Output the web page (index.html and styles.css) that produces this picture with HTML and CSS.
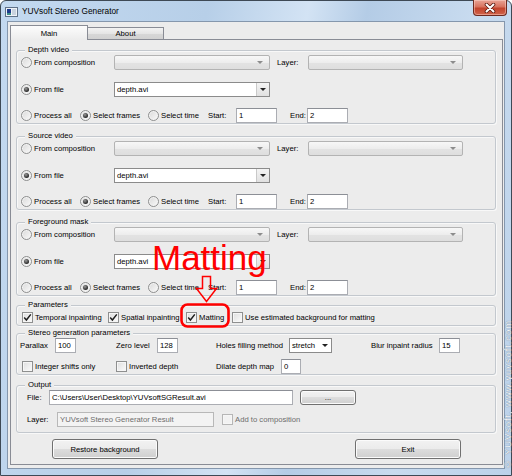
FILE: index.html
```html
<!DOCTYPE html>
<html>
<head>
<meta charset="utf-8">
<title>YUVsoft Stereo Generator</title>
<link rel="stylesheet" href="styles.css">
</head>
<body>
<div class="window">
    <div class="titlebar">
        <svg class="app-icon" width="13" height="10" viewBox="0 0 13 10">
            <rect x="0.5" y="0.5" width="12" height="9" fill="#eef2f7" stroke="#5f7188"/>
            <rect x="2" y="2" width="4" height="4" fill="#1d3c8c"/>
            <rect x="2" y="6" width="4" height="2" fill="#3f8f8a"/>
            <rect x="7" y="2" width="4" height="6" fill="#c9d3df"/>
        </svg>
        <span class="caption">YUVsoft Stereo Generator</span>
        <span class="close">
            <svg width="12" height="10" viewBox="0 0 12 10">
                <path d="M2.5 1.5 L9.5 8.5 M9.5 1.5 L2.5 8.5" stroke="#5a1a10" stroke-width="3.6" stroke-linecap="round"/>
                <path d="M2.5 1.5 L9.5 8.5 M9.5 1.5 L2.5 8.5" stroke="#fff" stroke-width="2" stroke-linecap="round"/>
            </svg>
        </span>
    </div>

    <div class="client">
        <div class="tabs">
            <span class="tab tab-active">Main</span>
            <span class="tab">About</span>
        </div>

        <div class="pane">
            <!-- depth video -->
            <div class="group">
                <div class="group-title">Depth video</div>
                <div class="row">
                    <span class="opt source-opt"><span class="radio"></span>From composition</span>
                    <span class="combo source-combo"></span>
                    <span class="layer-lbl">Layer:</span>
                    <span class="combo layer-combo"></span>
                </div>
                <div class="row">
                    <span class="opt source-opt"><span class="radio radio-on"></span>From file</span>
                    <span class="combo combo-edit source-combo"><span class="combo-text">depth.avi</span><span class="combo-btn"></span></span>
                </div>
                <div class="row row-range">
                    <span class="opt range-all"><span class="radio"></span>Process all</span>
                    <span class="opt range-frames"><span class="radio radio-on"></span>Select frames</span>
                    <span class="opt range-time"><span class="radio"></span>Select time</span>
                    <span class="start-lbl">Start:</span>
                    <span class="field frame-field">1</span>
                    <span class="end-lbl">End:</span>
                    <span class="field frame-field">2</span>
                </div>
            </div>

            <!-- source video -->
            <div class="group group-source">
                <div class="group-title">Source video</div>
                <div class="row">
                    <span class="opt source-opt"><span class="radio"></span>From composition</span>
                    <span class="combo source-combo"></span>
                    <span class="layer-lbl">Layer:</span>
                    <span class="combo layer-combo"></span>
                </div>
                <div class="row">
                    <span class="opt source-opt"><span class="radio radio-on"></span>From file</span>
                    <span class="combo combo-edit source-combo"><span class="combo-text">depth.avi</span><span class="combo-btn"></span></span>
                </div>
                <div class="row row-range">
                    <span class="opt range-all"><span class="radio"></span>Process all</span>
                    <span class="opt range-frames"><span class="radio radio-on"></span>Select frames</span>
                    <span class="opt range-time"><span class="radio"></span>Select time</span>
                    <span class="start-lbl">Start:</span>
                    <span class="field frame-field">1</span>
                    <span class="end-lbl">End:</span>
                    <span class="field frame-field">2</span>
                </div>
            </div>

            <!-- foreground mask -->
            <div class="group group-mask">
                <div class="group-title">Foreground mask</div>
                <div class="row">
                    <span class="opt source-opt"><span class="radio"></span>From composition</span>
                    <span class="combo source-combo"></span>
                    <span class="layer-lbl">Layer:</span>
                    <span class="combo layer-combo"></span>
                </div>
                <div class="row">
                    <span class="opt source-opt"><span class="radio radio-on"></span>From file</span>
                    <span class="combo combo-edit source-combo"><span class="combo-text">depth.avi</span><span class="combo-btn"></span></span>
                </div>
                <div class="row row-range">
                    <span class="opt range-all"><span class="radio"></span>Process all</span>
                    <span class="opt range-frames"><span class="radio radio-on"></span>Select frames</span>
                    <span class="opt range-time"><span class="radio"></span>Select time</span>
                    <span class="start-lbl">Start:</span>
                    <span class="field frame-field">1</span>
                    <span class="end-lbl">End:</span>
                    <span class="field frame-field">2</span>
                </div>
            </div>

            <!-- parameters -->
            <div class="group group-params">
                <div class="group-title">Parameters</div>
                <div class="row row-checks">
                    <span class="opt check-temporal"><span class="check"><svg width="9" height="9" viewBox="0 0 9 9"><path d="M1.2 4.6 L3.4 7 L7.8 1.4" fill="none" stroke="#1e1e1e" stroke-width="1.5"/></svg></span>Temporal inpainting</span>
                    <span class="opt check-spatial"><span class="check"><svg width="9" height="9" viewBox="0 0 9 9"><path d="M1.2 4.6 L3.4 7 L7.8 1.4" fill="none" stroke="#1e1e1e" stroke-width="1.5"/></svg></span>Spatial inpainting</span>
                    <span class="opt check-matting"><span class="check"><svg width="9" height="9" viewBox="0 0 9 9"><path d="M1.2 4.6 L3.4 7 L7.8 1.4" fill="none" stroke="#1e1e1e" stroke-width="1.5"/></svg></span>Matting</span>
                    <span class="opt"><span class="check"></span>Use estimated background for matting</span>
                </div>
            </div>

            <!-- stereo generation -->
            <div class="group group-stereo">
                <div class="group-title">Stereo generation parameters</div>
                <div class="row row-stereo">
                    <span class="cell cell-1"><span class="parallax-lbl">Parallax</span><span class="field num-field">100</span></span>
                    <span class="cell cell-2"><span class="zero-lbl">Zero level</span><span class="field num-field">128</span></span>
                    <span class="cell cell-3"><span class="holes-lbl">Holes filling method</span><span class="combo combo-edit holes-combo"><span class="combo-text">stretch</span><span class="combo-arrow"></span></span></span>
                    <span class="cell"><span class="blur-lbl">Blur inpaint radius</span><span class="field num-field">15</span></span>
                </div>
                <div class="row row-stereo row-stereo-2">
                    <span class="cell cell-1"><span class="opt opt-indent"><span class="check"></span>Integer shifts only</span></span>
                    <span class="cell cell-2"><span class="opt"><span class="check"></span>Inverted depth</span></span>
                    <span class="cell cell-3"><span class="dilate-lbl">Dilate depth map</span><span class="field dilate-field">0</span></span>
                </div>
            </div>

            <!-- output -->
            <div class="group group-output">
                <div class="group-title">Output</div>
                <div class="row row-output">
                    <span class="file-lbl">File:</span>
                    <span class="field file-field">C:\Users\User\Desktop\YUVsoftSGResult.avi</span>
                    <span class="btn browse-btn">...</span>
                </div>
                <div class="row row-output row-output-2">
                    <span class="layer-out-lbl">Layer:</span>
                    <span class="field field-disabled layer-field">YUVsoft Stereo Generator Result</span>
                    <span class="opt opt-disabled"><span class="check check-disabled"></span>Add to composition</span>
                </div>
            </div>

            <div class="actions">
                <span class="btn action-btn">Restore background</span>
                <span class="btn action-btn exit-btn">Exit</span>
            </div>
        </div>
    </div>

    <svg class="callout" width="512" height="476" viewBox="0 0 512 476">
        <text x="152" y="270" font-family="Liberation Sans, Arial, sans-serif" font-size="35" fill="#ff0000">Matting</text>
        <path d="M202.5 276.5 H210.5 V288.5 H216.5 L206.5 301.5 L196.5 288.5 H202.5 Z" fill="none" stroke="#ff0000" stroke-width="1.5"/>
        <rect x="181.5" y="304.5" width="47" height="22" rx="6" fill="none" stroke="#ff0000" stroke-width="2.6"/>
    </svg>

    <div class="watermark">© YUVsoft, www.yuvsoft.com</div>
</div>
</body>
</html>
```

FILE: styles.css
```css
* {
    box-sizing: border-box;
}

html, body {
    margin: 0;
}

body {
    width: 512px;
    height: 476px;
    overflow: hidden;
    font-family: "Liberation Sans", Arial, sans-serif;
    font-size: 7.7px;
    color: #000;
    background: #fff;
}

/* window frame */
.window {
    position: relative;
    width: 512px;
    height: 476px;
    border: 1px solid #3e4955;
    border-radius: 6px 6px 0 0;
    padding: 0 6px 6px 6px;
    display: flex;
    flex-direction: column;
    background: linear-gradient(100deg, #c3d9f0 0%, #b7cfe8 35%, #d3e3f4 52%, #b4cce6 62%, #c8dbef 80%, #bcd2ea 100%);
}

.titlebar {
    height: 20px;
    margin: 0 -6px;
    padding-left: 4px;
    display: flex;
    align-items: center;
}

.app-icon {
    flex: none;
    margin-top: 2px;
}

.caption {
    margin-left: 4px;
    font-size: 8.3px;
    color: #000;
}

.close {
    align-self: flex-start;
    margin: -1px 4px 0 auto;
    width: 34px;
    height: 16px;
    border: 1px solid #6e2a20;
    border-top: 0;
    border-radius: 0 0 4px 4px;
    background: linear-gradient(#e9a395 0%, #d8735f 45%, #c2432c 55%, #d0644b 100%);
    box-shadow: inset 0 0 0 1px rgba(255, 220, 210, 0.45);
    display: flex;
    align-items: center;
    justify-content: center;
}

.close svg {
    display: block;
}

.client {
    flex: 1;
    border: 1px solid #8597ad;
    background: #ececec;
    padding: 3px 1px 3px 2px;
    display: flex;
    flex-direction: column;
}

/* tabs */
.tabs {
    display: flex;
    align-items: flex-end;
    height: 15px;
    margin-bottom: -1px;
}

.tab {
    width: 77px;
    height: 13px;
    margin-left: -1px;
    border: 1px solid #898c95;
    border-bottom: 0;
    display: flex;
    align-items: center;
    justify-content: center;
    padding-bottom: 1px;
    background: linear-gradient(#f3f3f3, #e4e4e4 50%, #d7d7d7 51%, #d0d0d0);
}

.tab-active {
    position: relative;
    z-index: 1;
    width: 78px;
    height: 15px;
    margin-left: 0;
    padding-bottom: 0;
    background: linear-gradient(#fcfcfc, #ececec);
}

.pane {
    flex: 1;
    border: 1px solid #898c95;
    background: #ececec;
    padding: 10px 6px 0 5px;
}

/* group boxes */
.group {
    border: 1px solid #c3c8ce;
    border-radius: 3px;
    box-shadow: inset 1px 1px 0 #f8f8f8, 1px 1px 0 #f8f8f8;
}

.group-source, .group-mask {
    margin-top: 12px;
}

.group-params {
    margin-top: 9px;
}

.group-stereo {
    margin-top: 7px;
}

.group-output {
    margin-top: 10px;
    padding-bottom: 5px;
}

.group-title {
    width: max-content;
    height: 10px;
    line-height: 10px;
    margin: -6px 0 0 8px;
    padding: 0 3px;
    background: #ececec;
}

.row {
    display: flex;
    align-items: center;
    height: 15px;
    padding-left: 4px;
    white-space: nowrap;
}

.row + .row {
    margin-top: 12px;
}

.row + .row-range {
    margin-top: 11px;
}

/* radio buttons and check boxes */
.opt {
    flex: none;
    display: flex;
    align-items: center;
}

.radio, .check {
    flex: none;
    position: relative;
    width: 11px;
    height: 11px;
    margin-right: 2px;
    border: 1px solid #8e8f8f;
}

.radio {
    border-radius: 50%;
    background: linear-gradient(135deg, #d9d9d9, #fafafa);
    box-shadow: inset 0 0 0 1px #f4f4f4;
}

.radio-on::after {
    content: "";
    position: absolute;
    left: 2px;
    top: 2px;
    width: 5px;
    height: 5px;
    border-radius: 50%;
    background: radial-gradient(circle at 40% 35%, #9a9a9a, #1e1e1e 75%);
}

.check {
    background: linear-gradient(135deg, #dedede, #fbfbfb);
    box-shadow: inset 0 0 0 1px #f6f6f6;
}

.check svg {
    display: block;
}

.check-disabled {
    border-color: #b6b6b6;
    background: #f2f2f2;
}

.opt-disabled {
    color: #6d6d6d;
    margin-left: 8px;
}

/* combo boxes */
.combo {
    flex: none;
    position: relative;
    height: 15px;
    border: 1px solid #b3b3b3;
    border-radius: 2px;
    background: linear-gradient(#f7f7f7, #ededed 50%, #e3e3e3 51%, #dedede);
    display: flex;
    align-items: center;
}

.combo:empty::after {
    content: "";
    position: absolute;
    right: 6px;
    top: 5px;
    border-left: 3px solid transparent;
    border-right: 3px solid transparent;
    border-top: 3px solid #8c8c8c;
}

.combo-edit {
    background: #fff;
    border-color: #8b8b8b;
    border-radius: 0;
}

.combo-text {
    padding-left: 2px;
}

.combo-btn {
    position: relative;
    height: 100%;
    width: 13px;
    margin-left: auto;
    border-left: 1px solid #c9c9c9;
    background: linear-gradient(#f4f4f4, #e0e0e0);
}

.combo-btn::after, .combo-arrow::after {
    content: "";
    position: absolute;
    left: 3px;
    top: 5px;
    border-left: 3px solid transparent;
    border-right: 3px solid transparent;
    border-top: 3px solid #222;
}

.combo-arrow {
    position: relative;
    width: 12px;
    height: 100%;
    margin-left: auto;
}

.source-opt {
    width: 93px;
}

.source-combo {
    width: 156px;
}

.layer-lbl {
    width: 31px;
    margin-left: 7px;
}

.layer-combo {
    width: 155px;
}

.range-all {
    width: 59px;
}

.range-frames {
    width: 68px;
}

.range-time {
    width: 60px;
}

.start-lbl {
    width: 28px;
}

.end-lbl {
    width: 17px;
    margin-left: 13px;
}

/* text fields */
.field {
    flex: none;
    height: 15px;
    border: 1px solid #abadb3;
    border-top-color: #8c8f96;
    background: #fff;
    padding-left: 2px;
    display: flex;
    align-items: center;
    overflow: hidden;
}

.field-disabled {
    background: #f3f3f3;
    border-color: #b8b8b8;
    color: #6d6d6d;
}

.frame-field {
    width: 41px;
}

/* parameters */
.row-checks {
    padding-left: 5px;
}

.check-temporal {
    width: 86px;
}

.check-spatial {
    width: 78px;
}

.check-matting {
    width: 46px;
}

/* stereo generation */
.row-stereo {
    padding-left: 3px;
}

.row + .row-stereo-2 {
    margin-top: 6px;
}

.cell {
    flex: none;
    display: flex;
    align-items: center;
}

.cell-1 {
    width: 96px;
}

.cell-2 {
    width: 100px;
}

.cell-3 {
    width: 155px;
}

.num-field {
    width: 21px;
}

.parallax-lbl {
    width: 35px;
}

.zero-lbl {
    width: 41px;
}

.holes-lbl {
    width: 73px;
}

.holes-combo {
    width: 43px;
}

.blur-lbl {
    width: 68px;
}

.dilate-lbl {
    width: 65px;
}

.dilate-field {
    width: 20px;
}

.opt-indent {
    margin-left: 2px;
}

/* output */
.row-output {
    padding-left: 10px;
}

.row + .row-output {
    margin-top: 1px;
}

.row + .row-output-2 {
    margin-top: 7px;
}

.file-lbl {
    width: 22px;
}

.file-field {
    width: 244px;
}

.layer-out-lbl {
    width: 30px;
}

.layer-field {
    width: 157px;
}

/* buttons */
.btn {
    flex: none;
    height: 20px;
    border: 1px solid #707070;
    border-radius: 3px;
    background: linear-gradient(#f2f2f2, #ebebeb 49%, #dddddd 50%, #cfcfcf);
    box-shadow: inset 0 0 0 1px #fbfbfb;
    display: flex;
    align-items: center;
    justify-content: center;
}

.browse-btn {
    width: 56px;
    height: 15px;
    margin-left: 7px;
}

.actions {
    display: flex;
    margin-top: 6px;
    padding-left: 36px;
}

.action-btn {
    width: 106px;
}

.exit-btn {
    margin-left: 197px;
}

/* annotation drawn over the dialog */
.callout {
    position: absolute;
    left: -1px;
    top: -1px;
    pointer-events: none;
}

.watermark {
    position: absolute;
    right: -1px;
    bottom: 5px;
    writing-mode: vertical-rl;
    transform: rotate(180deg);
    font-size: 9.5px;
    line-height: 8px;
    letter-spacing: 0.9px;
    color: #f5f8fc;
    text-shadow: 0 0 1px #4a5a6c;
}
```
